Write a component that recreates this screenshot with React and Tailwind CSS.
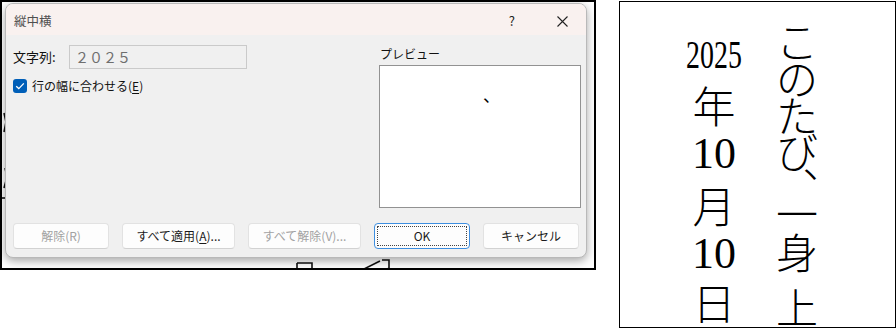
import React from "react";

const UI = { fontFamily: '"Noto Sans CJK JP", "Noto Sans", sans-serif' };
const JP = { fontFamily: '"Noto Sans CJK JP", sans-serif' };
const SERIF = { fontFamily: '"Liberation Serif", "Noto Sans CJK JP", serif' };

function Btn({ children, disabled, primary, w }) {
  return (
    <div
      className={`relative flex h-[26px] items-center justify-center rounded-[4px] border bg-[#fdfdfd] text-[12px] ${w} ${
        primary ? "border-[#3d8ee0]" : "border-[#e2e2e2] border-b-[#d2d2d2]"
      } ${disabled ? "text-[#a2a2a2]" : "text-[#1b1b1b]"}`}
    >
      {primary && <span className="absolute inset-[2px] border border-dotted border-[#444]" />}
      <span className="relative leading-none">{children}</span>
    </div>
  );
}

function Cell({ h, children, className = "" }) {
  return (
    <div className={`flex w-full shrink-0 items-center justify-center ${className}`} style={{ height: h }}>
      {children}
    </div>
  );
}

export default function App() {
  return (
    <div className="flex h-[328px] w-[896px] items-start overflow-hidden bg-white" style={UI}>
      {/* Left: screenshot of the dialog */}
      <div className="relative h-[270px] w-[596px] overflow-hidden border-2 border-black bg-white pl-[3px] pt-px">
        {/* document fragments behind the dialog */}
        <svg className="absolute left-0 top-0" width="596" height="270" viewBox="0 0 596 270">
          <g stroke="#111" strokeWidth="1.6" fill="none">
            <path d="M2 111 L4 120 L2 130" />
            <path d="M3 166 L5 175 L2 186" />
            <path d="M0 196 L4 196" />
            <path d="M295 261 V268 M295 261 H310 V268" />
            <path d="M362 267 L378 259" />
            <path d="M380 258 H387 V266 L384 268" />
          </g>
        </svg>

        <div className="relative z-10 flex h-[255px] w-[582px] flex-col overflow-hidden rounded-[8px] border border-[#b9b9b9] bg-[#f0f0f0] shadow-[0_3px_10px_rgba(0,0,0,0.35)]">
          {/* title bar */}
          <div className="flex h-[31px] shrink-0 items-center bg-[#f9f1ef] pl-[8px] pt-[3px]">
            <span className="text-[12.5px] text-[#505050]">縦中横</span>
            <span className="ml-auto mr-[42px] text-[13px] text-[#222]">?</span>
            <svg className="mr-[18px]" width="11" height="11" viewBox="0 0 11 11">
              <path d="M0.5 0.5 L10.5 10.5 M10.5 0.5 L0.5 10.5" stroke="#222" strokeWidth="1.1" />
            </svg>
          </div>

          {/* body */}
          <div className="flex flex-1 flex-col">
            <div className="flex pl-[7px] pr-[5px] pt-[10px]">
              <div className="flex flex-col">
                <div className="flex items-center">
                  <span className="w-[56px] text-[13px] text-[#111]">文字列:</span>
                  <div className="flex h-[24px] w-[178px] items-center border border-[#cacaca] bg-[#f0f0f0] pl-[5px] text-[14px] text-[#6e6e6e]">
                    ２０２５
                  </div>
                </div>
                <div className="mt-[8px] flex items-center">
                  <div className="flex h-[14px] w-[14px] items-center justify-center rounded-[3px] bg-[#005fb8]">
                    <svg width="10" height="8" viewBox="0 0 10 8">
                      <path d="M1.2 4.2 L3.8 6.6 L8.8 1.4" stroke="#fff" strokeWidth="1.3" fill="none" />
                    </svg>
                  </div>
                  <span className="ml-[5px] text-[12px] text-[#111]">
                    行の幅に合わせる(<span className="underline underline-offset-2">E</span>)
                  </span>
                </div>
              </div>
              <div className="ml-auto flex w-[202px] flex-col">
                <span className="pl-px text-[12px] leading-[18px] text-[#111]">プレビュー</span>
                <div className="relative mt-[2px] h-[143px] w-[202px] border border-[#929292] bg-white">
                  <span className="absolute left-[103px] top-[20px] text-[17px] leading-none text-black" style={JP}>
                    、
                  </span>
                </div>
              </div>
            </div>

            <div className="mt-auto flex gap-[13px] pb-[8px] pl-[7px]">
              <Btn disabled w="w-[96px]">解除(R)</Btn>
              <Btn w="w-[113px]">
                すべて適用(<span className="underline underline-offset-2">A</span>)...
              </Btn>
              <Btn disabled w="w-[113px]">すべて解除(V)...</Btn>
              <Btn primary w="w-[96px]">OK</Btn>
              <Btn w="w-[96px]">キャンセル</Btn>
            </div>
          </div>
        </div>
      </div>

      {/* Right: vertical text page */}
      <div className="ml-[23px] mt-px flex h-[327px] w-[277px] shrink-0 overflow-hidden border border-black bg-white pl-[64px]">
        {/* left column: 2025年10月10日 */}
        <div className="flex w-[60px] flex-col pt-[27px] text-black">
          <Cell h={50}>
            <span className="inline-block origin-center scale-x-[0.68] text-[41px] leading-[40px]" style={SERIF}>
              2025
            </span>
          </Cell>
          <Cell h={50}>
            <span className="text-[43px] font-light leading-[40px]" style={JP}>年</span>
          </Cell>
          <Cell h={50}>
            <span className="text-[44px] leading-[40px]" style={SERIF}>10</span>
          </Cell>
          <Cell h={50}>
            <span className="text-[43px] font-light leading-[40px]" style={JP}>月</span>
          </Cell>
          <Cell h={50}>
            <span className="text-[44px] leading-[40px]" style={SERIF}>10</span>
          </Cell>
          <Cell h={44}>
            <span className="text-[43px] font-light leading-[40px]" style={JP}>日</span>
          </Cell>
        </div>

        {/* right column: このたび、一身上 */}
        <div className="ml-[23px] flex w-[60px] flex-col pt-[19px] text-black" style={JP}>
          <Cell h={37}><span className="text-[42px] font-light leading-[36px]">こ</span></Cell>
          <Cell h={37}><span className="text-[42px] font-light leading-[36px]">の</span></Cell>
          <Cell h={37}><span className="text-[42px] font-light leading-[36px]">た</span></Cell>
          <Cell h={35}><span className="text-[42px] font-light leading-[36px]">び</span></Cell>
          <Cell h={26} className="!items-start">
            <span className="text-[42px] font-light leading-none [writing-mode:vertical-rl]">、</span>
          </Cell>
          <Cell h={37}><span className="text-[42px] font-light leading-[36px]">一</span></Cell>
          <Cell h={41}><span className="text-[42px] font-light leading-[36px]">身</span></Cell>
          <Cell h={70}><span className="text-[42px] font-light leading-[36px]">上</span></Cell>
        </div>
      </div>
    </div>
  );
}
